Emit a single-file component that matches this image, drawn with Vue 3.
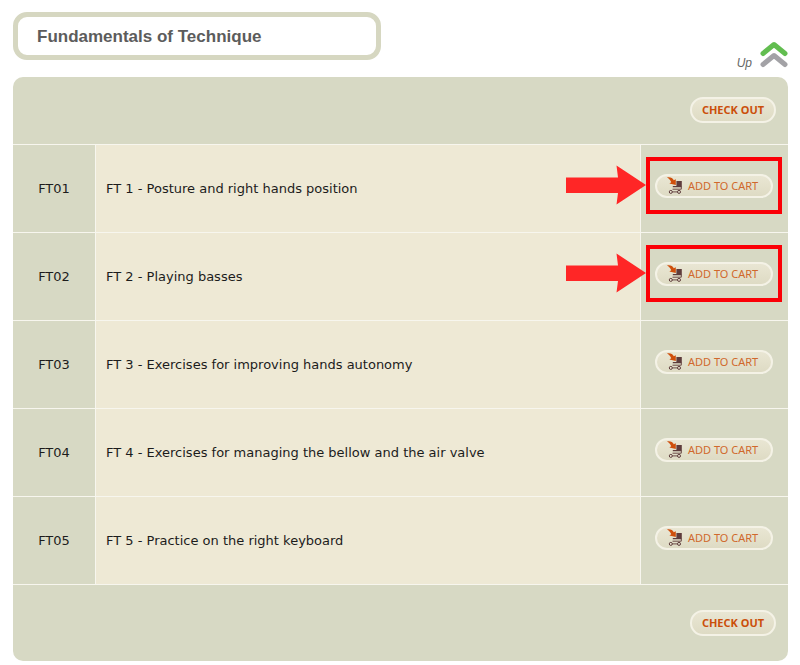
<script setup>
const lessons = [
  { code: 'FT01', title: 'FT 1 - Posture and right hands position', highlighted: true },
  { code: 'FT02', title: 'FT 2 - Playing basses', highlighted: true },
  { code: 'FT03', title: 'FT 3 - Exercises for improving hands autonomy', highlighted: false },
  { code: 'FT04', title: 'FT 4 - Exercises for managing the bellow and the air valve', highlighted: false },
  { code: 'FT05', title: 'FT 5 - Practice on the right keyboard', highlighted: false },
]
</script>

<template>
  <main class="page">
    <header class="top">
      <h1 class="title">Fundamentals of Technique</h1>
      <a class="up" href="#">
        <span>Up</span>
        <svg width="28" height="28" viewBox="0 0 28 28" fill="none" stroke-width="5" stroke-linecap="round" stroke-linejoin="round" aria-hidden="true">
          <path d="M3 23.5 L14 14.5 L25 23.5" stroke="#a3a2a6" />
          <path d="M3 12.5 L14 3.5 L25 12.5" stroke="#62bd50" />
        </svg>
      </a>
    </header>

    <section class="panel">
      <div class="bar bar-top">
        <button type="button" class="pill checkout">CHECK OUT</button>
      </div>

      <table class="lessons">
        <tbody>
          <tr v-for="lesson in lessons" :key="lesson.code">
            <td class="code">{{ lesson.code }}</td>
            <td class="name">{{ lesson.title }}</td>
            <td class="action">
              <div class="action-inner">
                <button type="button" class="pill add">
                  <svg width="17" height="18" viewBox="0 0 17 18" aria-hidden="true">
                    <path d="M10.4 4 H15.8 V10.2 H6.8 V9 H10.4 Z" fill="#5e3c3c" />
                    <path d="M15.3 9.5 V12.2 H6.5" fill="none" stroke="#6b4a48" stroke-width="1" />
                    <path d="M5.5 14.9 H12.5" fill="none" stroke="#6b4a48" stroke-width="1" />
                    <circle cx="4.8" cy="14.9" r="1.5" fill="#e8e3cf" stroke="#5e3c3c" stroke-width="1" />
                    <circle cx="13" cy="14.9" r="1.5" fill="#e8e3cf" stroke="#5e3c3c" stroke-width="1" />
                    <path d="M1 0.4 C4.2 -0.2 6.8 0.8 7.8 3.2 L9.8 2.2 V8 L3.4 6.6 L5.2 5.2 C4.6 3.2 3.4 1.8 1 0.4 Z" fill="#cf4f0c" />
                  </svg>
                  <span>ADD TO CART</span>
                </button>
                <div v-if="lesson.highlighted" class="callout">
                  <svg class="arrow" width="80" height="40" viewBox="0 0 80 40" aria-hidden="true">
                    <path d="M0 12.5 H52 L50.5 0.5 L80 20 L50.5 39.5 L52 28 H0 Z" fill="#ff2626" />
                  </svg>
                </div>
              </div>
            </td>
          </tr>
        </tbody>
      </table>

      <div class="bar bar-bottom">
        <button type="button" class="pill checkout">CHECK OUT</button>
      </div>
    </section>
  </main>
</template>

<style>
body {
  margin: 0;
  background: #fff;
}
</style>

<style scoped>
.page {
  padding: 12px 12px 4px 13px;
  font-family: Verdana, "DejaVu Sans", sans-serif;
  font-size: 13px;
  color: #1c1c1c;
}

.top {
  display: flex;
  justify-content: space-between;
  align-items: flex-end;
  padding-bottom: 8px;
}

.title {
  box-sizing: border-box;
  flex: 0 1 368px;
  margin: 0 0 9px;
  padding: 11px 19px 9px;
  border: 5px solid #d6d7c1;
  border-radius: 14px;
  font: bold 17px/18px "Liberation Sans", Arial, sans-serif;
  color: #5c5c5c;
}

.up {
  display: flex;
  align-items: flex-end;
  gap: 8px;
  font: italic 12px/12px "Liberation Sans", Arial, sans-serif;
  color: #666;
  text-decoration: none;
}

.panel {
  overflow: hidden;
  border-radius: 10px;
  background: #d7d9c4;
}

.bar {
  display: flex;
  justify-content: flex-end;
}

.bar-top {
  padding: 20px 12px 21px;
}

.bar-bottom {
  padding: 25px 12px;
  border-top: 1px solid #f7f6ee;
}

.pill {
  box-sizing: border-box;
  display: flex;
  align-items: center;
  border: 2px solid #f4f2e6;
  border-radius: 13px;
  background: linear-gradient(#e9e6d3, #dedbc4);
  cursor: pointer;
}

.checkout {
  justify-content: center;
  width: 86px;
  height: 26px;
  padding: 0;
  font: bold 11px/16px "Noto Sans", sans-serif;
  color: #cb4f0a;
}

.add {
  gap: 5px;
  width: 118px;
  height: 24px;
  padding: 0 0 0 9px;
  font: 11px/16px "Noto Sans", sans-serif;
  color: #d0682c;
  white-space: nowrap;
}

.add svg {
  flex: none;
}

.lessons {
  width: 100%;
  border-collapse: separate;
  border-spacing: 0;
}

.lessons td {
  box-sizing: border-box;
  height: 88px;
  padding: 0;
  border-top: 1px solid #f7f6ee;
}

.lessons .code {
  width: 82px;
  text-align: center;
}

.lessons .name {
  padding: 0 10px;
  border-left: 1px solid #f7f6ee;
  border-right: 1px solid #f7f6ee;
  background: #eee9d5;
}

.lessons .action {
  width: 147px;
  padding: 0 14px 5px;
}

.action-inner {
  position: relative;
}

.callout {
  position: absolute;
  inset: -17px -8px -16px -9px;
  border: 4px solid #fb0007;
  pointer-events: none;
}

.arrow {
  position: absolute;
  top: 4px;
  right: 100%;
  margin-right: 4px;
}
</style>
